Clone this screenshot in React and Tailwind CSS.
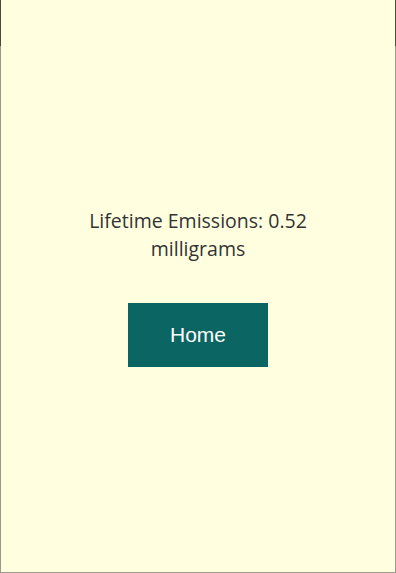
export default function App() {
  return (
    <div className="w-[396px] h-[573px] bg-[#ffffe0] flex flex-col">
      <div className="h-[46px] border-x border-[#4b4b3c] shrink-0" />
      <div className="flex-1 border-x border-b border-[#9a9a90] flex flex-col items-center">
        <p
          className="mt-[161px] w-[250px] text-center text-[19.5px] leading-[28px] text-[#333333]"
          style={{ fontFamily: '"Open Sans", "Noto Sans", sans-serif' }}
        >
          Lifetime Emissions: 0.52 milligrams
        </p>
        <button
          className="mt-[40px] w-[140px] h-[64px] bg-[#0b6562] text-white text-[21px]"
          style={{ fontFamily: '"Liberation Sans", Arial, sans-serif' }}
        >
          Home
        </button>
      </div>
    </div>
  );
}
